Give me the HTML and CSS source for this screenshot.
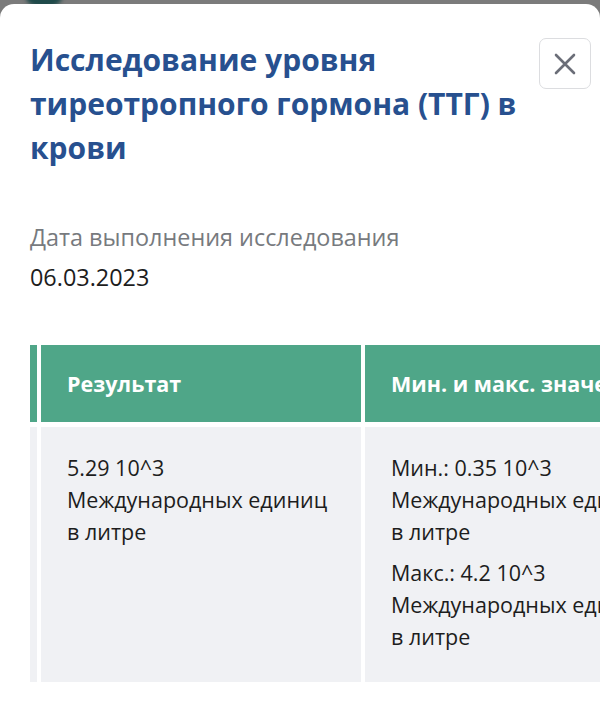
FILE: index.html
```html
<!DOCTYPE html>
<html lang="ru">
<head>
<meta charset="utf-8">
<link rel="stylesheet" href="styles.css">
</head>
<body>
<div class="backdrop"><span class="blob"></span></div>
<div class="modal">
  <div class="head">
    <h1 class="title">Исследование уровня тиреотропного гормона (ТТГ) в крови</h1>
    <button class="close" aria-label="Закрыть">
      <svg width="24" height="24" viewBox="0 0 24 24"><path d="M3 3 L21 21 M21 3 L3 21" stroke="#6b6e78" stroke-width="2.6" stroke-linecap="round" fill="none"/></svg>
    </button>
  </div>
  <div class="field">
    <div class="label">Дата выполнения исследования</div>
    <div class="value">06.03.2023</div>
  </div>
  <div class="scroller">
    <div class="table">
      <div class="th stub"></div>
      <div class="th">Результат</div>
      <div class="th">Мин. и макс. значения</div>
      <div class="td stub"></div>
      <div class="td">
        <p><span class="num">5.29 10^3</span> Международных единиц в литре</p>
      </div>
      <div class="td">
        <p><span class="num">Мин.: 0.35 10^3</span> Международных единиц в литре</p>
        <p><span class="num">Макс.: 4.2 10^3</span> Международных единиц в литре</p>
      </div>
    </div>
  </div>
</div>
</body>
</html>
```
FILE: styles.css
```css
html, body {
  margin: 0;
  padding: 0;
}
body {
  background: #7b7b7b;
  font-family: "Open Sans", "Noto Sans", sans-serif;
  width: 600px;
  height: 712px;
  overflow: hidden;
  position: relative;
}
.backdrop {
  height: 4px;
  position: relative;
}
.blob {
  position: absolute;
  left: 26px;
  top: -14px;
  width: 36px;
  height: 22px;
  border-radius: 50%;
  background: #1f4a4a;
  filter: blur(2px);
}
.modal {
  position: relative;
  background: #fff;
  border-radius: 14px 14px 0 0;
  height: 708px;
  padding: 34px 9px 0 30px;
  box-sizing: border-box;
}
.head {
  display: flex;
  align-items: flex-start;
  gap: 18px;
}
.title {
  flex: 1;
  margin: 0;
  font-size: 30px;
  line-height: 44px;
  font-weight: 700;
  color: #27508f;
}
.close {
  flex: none;
  width: 52px;
  height: 51px;
  border: 1.5px solid #dcdde0;
  border-radius: 7px;
  background: #fff;
  display: flex;
  align-items: center;
  justify-content: center;
  padding: 0;
  margin-top: 0;
}
.field {
  margin-top: 49px;
}
.label {
  font-size: 23.4px;
  line-height: 36px;
  color: #777a7e;
}
.value {
  margin-top: 4px;
  font-size: 23.4px;
  line-height: 36px;
  color: #1d1d1d;
}
.scroller {
  margin-top: 50px;
  margin-right: -9px;
  overflow: hidden;
}
.table {
  display: grid;
  grid-template-columns: 7px 320px 320px;
  grid-template-rows: 77px auto;
  column-gap: 4px;
  row-gap: 5px;
}
.th {
  background: #4fa688;
  color: #fff;
  font-weight: 700;
  font-size: 21.5px;
  line-height: 32px;
  padding: 0 26px;
  display: flex;
  align-items: center;
  white-space: nowrap;
}
.th.stub, .td.stub {
  padding: 0;
}
.td {
  background: #f0f1f4;
  padding: 25px 18px 29px 26px;
  font-size: 21.5px;
  line-height: 32px;
  color: #1d1d1d;
  min-height: 255px;
  box-sizing: border-box;
}
.td p {
  margin: 0 0 9px;
}
.td p:last-child {
  margin-bottom: 0;
}
.num {
  display: block;
}
```
